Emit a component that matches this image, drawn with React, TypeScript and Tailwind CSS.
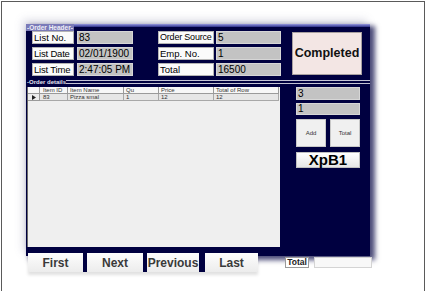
export default function App() {
  return (
    <div className="w-[426px] h-[291px] bg-white pt-[1px] pl-[1px] overflow-hidden font-['Liberation_Sans',Arial,sans-serif]">
      <div className="w-[424px] h-[290px] border-l border-t border-r border-[#5a5a5a]">
        {/* Main dark panel */}
        <div className="ml-[24px] mt-[22px] w-[344px] h-[232px] bg-[#000040] shadow-[4px_3px_5px_1px_rgba(0,0,64,0.7),-3px_-4px_8px_rgba(110,110,150,0.25)] flex flex-col">
          {/* Order Header title */}
          <div className="h-[7px] flex items-start">
            <span className="text-[6.5px] font-bold leading-[7px] text-[#eeeef6] bg-[#7a7ab8] px-[1px] whitespace-nowrap">-Order Header-</span>
            <div className="flex-1 h-[3px] bg-gradient-to-b from-[#9a9ae0] to-[#30308a]" />
          </div>
          {/* Header fields */}
          <div className="flex pl-[6px]">
            <div className="flex flex-col gap-[3px]">
              <div className="flex gap-[3px]">
                <div className="w-[42px] h-[13px] bg-[#fbfbfb] border border-[#b5b5b5] text-[9.5px] leading-[11px] pl-[1px] text-black whitespace-nowrap overflow-hidden">List No.</div>
                <div className="w-[56px] h-[13px] bg-[#c3c3c3] border border-[#d6d6d6] text-[10px] leading-[11px] pl-[1px] text-black">83</div>
              </div>
              <div className="flex gap-[3px]">
                <div className="w-[42px] h-[13px] bg-[#fbfbfb] border border-[#b5b5b5] text-[9.5px] leading-[11px] pl-[1px] text-black whitespace-nowrap overflow-hidden tracking-[-0.2px]">List Date</div>
                <div className="w-[56px] h-[13px] bg-[#c3c3c3] border border-[#d6d6d6] text-[10px] leading-[11px] pl-[1px] text-black">02/01/1900</div>
              </div>
              <div className="flex gap-[3px]">
                <div className="w-[42px] h-[13px] bg-[#fbfbfb] border border-[#b5b5b5] text-[9.5px] leading-[11px] pl-[1px] text-black whitespace-nowrap overflow-hidden tracking-[-0.2px]">List Time</div>
                <div className="w-[56px] h-[13px] bg-[#c3c3c3] border border-[#d6d6d6] text-[10px] leading-[11px] pl-[1px] text-black whitespace-nowrap">2:47:05 PM</div>
              </div>
            </div>
            <div className="ml-[25px] flex flex-col gap-[3px]">
              <div className="flex gap-[2px]">
                <div className="w-[56px] h-[13px] bg-[#fbfbfb] border border-[#b5b5b5] text-[9px] leading-[11px] pl-[1px] text-black whitespace-nowrap overflow-hidden tracking-[-0.2px]">Order Source</div>
                <div className="w-[65px] h-[13px] bg-[#c3c3c3] border border-[#d6d6d6] text-[10px] leading-[11px] pl-[1px] text-black">5</div>
              </div>
              <div className="flex gap-[2px]">
                <div className="w-[56px] h-[13px] bg-[#fbfbfb] border border-[#b5b5b5] text-[9.5px] leading-[11px] pl-[1px] text-black whitespace-nowrap">Emp. No.</div>
                <div className="w-[65px] h-[13px] bg-[#c3c3c3] border border-[#d6d6d6] text-[10px] leading-[11px] pl-[1px] text-black">1</div>
              </div>
              <div className="flex gap-[2px]">
                <div className="w-[56px] h-[13px] bg-[#fbfbfb] border border-[#b5b5b5] text-[9.5px] leading-[11px] pl-[1px] text-black whitespace-nowrap">Total</div>
                <div className="w-[65px] h-[13px] bg-[#c3c3c3] border border-[#d6d6d6] text-[10px] leading-[11px] pl-[1px] text-black">16500</div>
              </div>
            </div>
            <div className="ml-[11px] mt-[1px] w-[70px] h-[43px] bg-[#f3e6e4] border border-[#a8a0a0] flex items-center justify-center text-[12.5px] font-bold text-[#111]">
              Completed
            </div>
          </div>
          {/* Order details title */}
          <div className="mt-[3px] h-[6px] flex items-center">
            <span className="text-[6px] font-bold leading-[6px] text-[#e4e4ee] whitespace-nowrap pl-[1px]">-Order details</span>
            <div className="flex-1 h-[4px] border-t border-b border-[#c4c4d4]" />
          </div>
          {/* Body */}
          <div className="mt-[2px] flex">
            <div className="ml-[1px] w-[253px] h-[160px] bg-[#efefef] border-l border-[#6a6a6a] text-[6px] leading-[6px] text-[#333]">
              <div className="flex h-[7px]">
                <div className="w-[12px] bg-[#f7f7f7] border-r border-b border-[#9a9a9a]" />
                <div className="w-[28px] bg-[#f7f7f7] border-r border-b border-[#9a9a9a] pl-[3px] whitespace-nowrap">Item ID</div>
                <div className="w-[56px] bg-[#f7f7f7] border-r border-b border-[#9a9a9a] pl-[2px] whitespace-nowrap">Item Name</div>
                <div className="w-[35px] bg-[#f7f7f7] border-r border-b border-[#9a9a9a] pl-[2px]">Qu</div>
                <div className="w-[55px] bg-[#f7f7f7] border-r border-b border-[#9a9a9a] pl-[2px]">Price</div>
                <div className="w-[65px] bg-[#f7f7f7] border-r border-b border-[#9a9a9a] pl-[2px] whitespace-nowrap">Total of Row</div>
              </div>
              <div className="flex h-[7px]">
                <div className="w-[12px] bg-[#ececec] border-r border-b border-[#9a9a9a] flex items-center justify-center">
                  <svg width="4" height="5" viewBox="0 0 4 5"><polygon points="0,0 4,2.5 0,5" fill="#222" /></svg>
                </div>
                <div className="w-[28px] bg-[#e6e6e6] border-r border-b border-[#a8a8a8] pl-[3px]">83</div>
                <div className="w-[56px] bg-[#e6e6e6] border-r border-b border-[#a8a8a8] pl-[2px] whitespace-nowrap">Pizza smal</div>
                <div className="w-[35px] bg-[#e6e6e6] border-r border-b border-[#a8a8a8] pl-[2px]">1</div>
                <div className="w-[55px] bg-[#e6e6e6] border-r border-b border-[#a8a8a8] pl-[2px]">12</div>
                <div className="w-[65px] bg-[#e6e6e6] border-r border-b border-[#a8a8a8] pl-[2px]">12</div>
              </div>
            </div>
            <div className="ml-[16px] w-[64px] flex flex-col">
              <div className="h-[13px] bg-[#c3c3c3] border border-[#d6d6d6] text-[10px] leading-[11px] pl-[1px] text-black">3</div>
              <div className="mt-[3px] h-[12px] bg-[#c3c3c3] border border-[#d6d6d6] text-[10px] leading-[10px] pl-[1px] text-black">1</div>
              <div className="mt-[4px] flex gap-[4px]">
                <div className="w-[30px] h-[28px] bg-[#f0f0f0] border border-[#c8c8c8] flex items-center justify-center text-[6px] text-[#333]">Add</div>
                <div className="w-[30px] h-[28px] bg-[#f0f0f0] border border-[#c8c8c8] flex items-center justify-center text-[6px] text-[#333]">Total</div>
              </div>
              <div className="mt-[5px] h-[16px] bg-gradient-to-b from-[#ffffff] to-[#e6e6e6] border border-[#c0c0c0] flex items-center justify-center text-[15px] font-bold text-black">XpB1</div>
            </div>
          </div>
        </div>
        {/* Bottom nav row */}
        <div className="mt-[-3px] ml-[26px] flex items-start">
          <div className="flex bg-[#000040] shadow-[0_3px_3px_rgba(0,0,0,0.12)]">
            <div className="w-[55px] h-[19px] bg-gradient-to-b from-[#fdfdfd] to-[#ececec] flex items-center justify-center text-[12px] font-bold text-[#3a3a3a]">First</div>
            <div className="ml-[4px] w-[56px] h-[19px] bg-gradient-to-b from-[#fdfdfd] to-[#ececec] flex items-center justify-center text-[12px] font-bold text-[#3a3a3a]">Next</div>
            <div className="ml-[4px] w-[52px] h-[19px] bg-gradient-to-b from-[#fdfdfd] to-[#ececec] flex items-center justify-center text-[12px] font-bold text-[#3a3a3a]">Previous</div>
            <div className="ml-[6px] w-[53px] h-[19px] bg-gradient-to-b from-[#fdfdfd] to-[#ececec] flex items-center justify-center text-[12px] font-bold text-[#3a3a3a]">Last</div>
          </div>
          <div className="ml-[27px] mt-[4px] w-[24px] h-[11px] bg-white border border-[#9a9a9a] flex items-center justify-center text-[8.5px] font-bold text-[#222]">Total</div>
          <div className="ml-[5px] mt-[4px] w-[58px] h-[11px] bg-[#f8f8f8] border border-[#d4d4d4]" />
        </div>
      </div>
    </div>
  );
}
